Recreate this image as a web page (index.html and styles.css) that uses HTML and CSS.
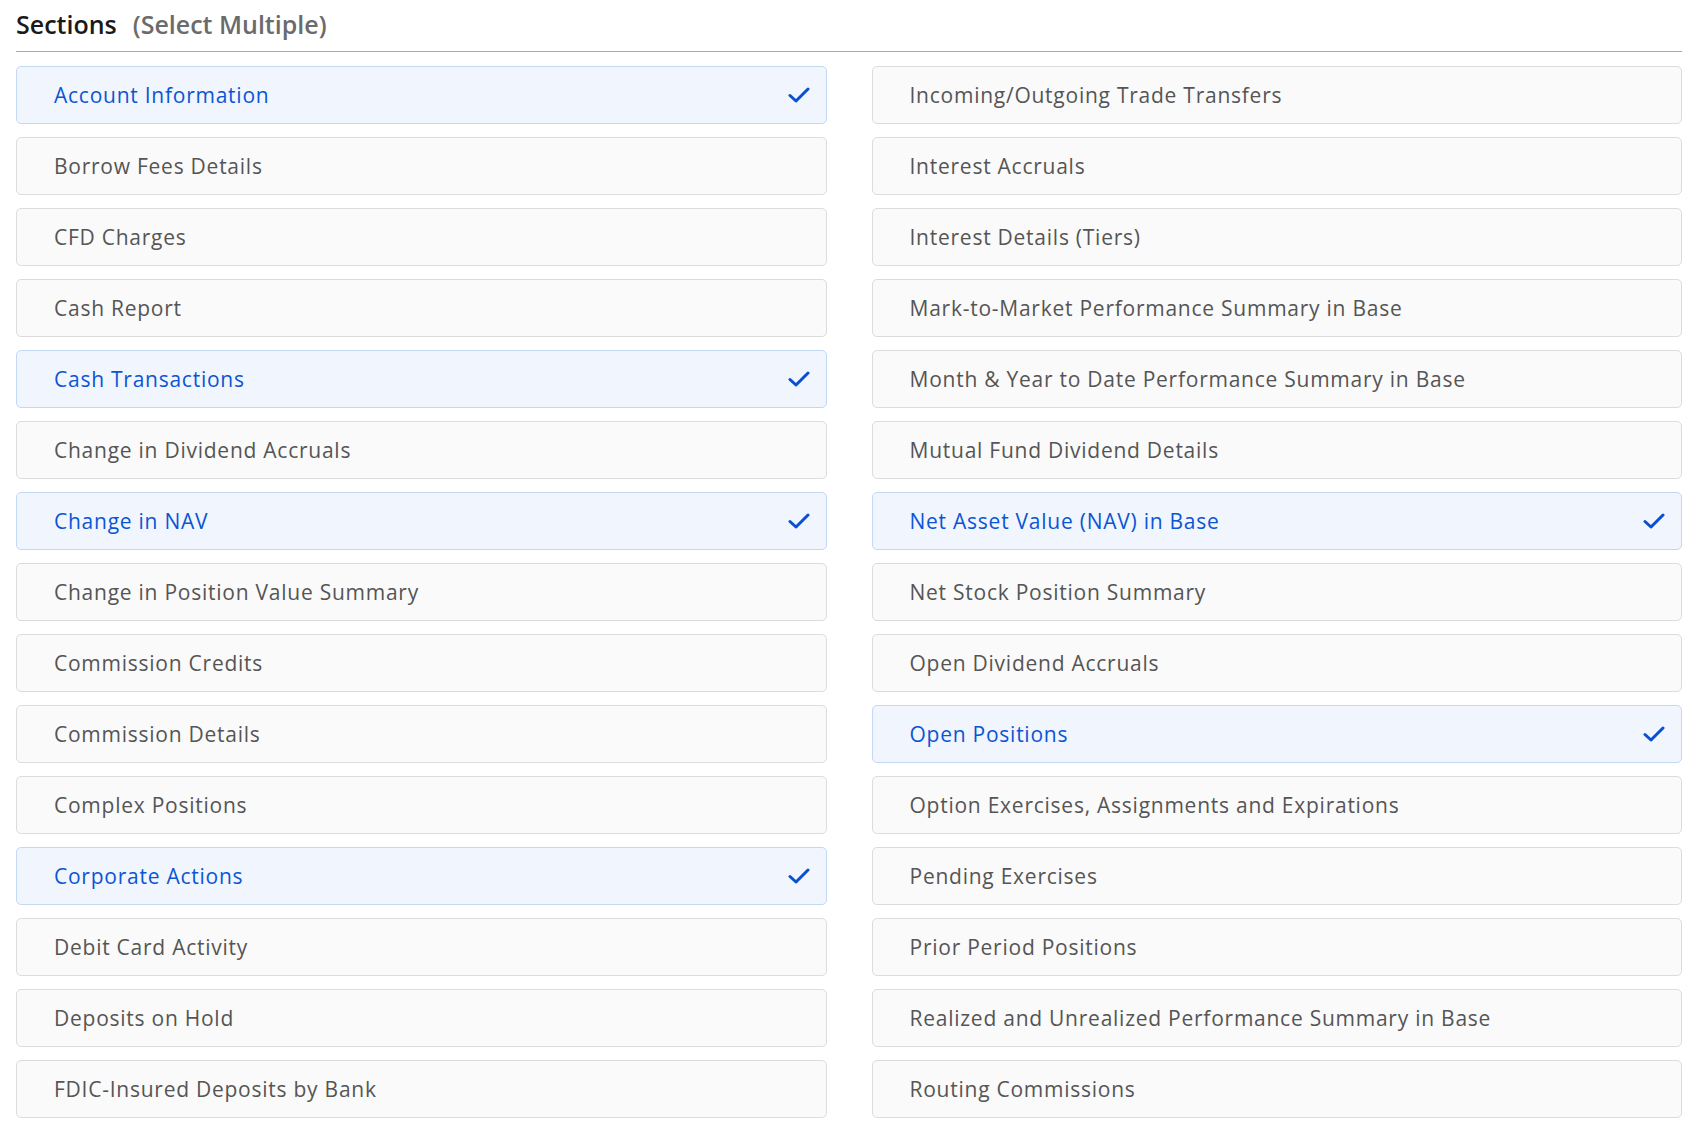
FILE: index.html
```html
<!DOCTYPE html>
<html lang="en">
<head>
  <meta charset="UTF-8" />
  <title>Sections</title>
  <link rel="stylesheet" href="styles.css">
</head>
<body>
  <div class="container">
    <div class="cabecera">
      <span class="titulo">Sections</span>
      <span class="nota">(Select Multiple)</span>
    </div>

    <div class="lista">
      <div class="opcion activa"><span>Account Information</span><svg class="check" viewBox="0 0 22 16"><path d="M2 8.5 L8 14 L20 2"/></svg></div>
      <div class="opcion"><span>Borrow Fees Details</span></div>
      <div class="opcion"><span>CFD Charges</span></div>
      <div class="opcion"><span>Cash Report</span></div>
      <div class="opcion activa"><span>Cash Transactions</span><svg class="check" viewBox="0 0 22 16"><path d="M2 8.5 L8 14 L20 2"/></svg></div>
      <div class="opcion"><span>Change in Dividend Accruals</span></div>
      <div class="opcion activa"><span>Change in NAV</span><svg class="check" viewBox="0 0 22 16"><path d="M2 8.5 L8 14 L20 2"/></svg></div>
      <div class="opcion"><span>Change in Position Value Summary</span></div>
      <div class="opcion"><span>Commission Credits</span></div>
      <div class="opcion"><span>Commission Details</span></div>
      <div class="opcion"><span>Complex Positions</span></div>
      <div class="opcion activa"><span>Corporate Actions</span><svg class="check" viewBox="0 0 22 16"><path d="M2 8.5 L8 14 L20 2"/></svg></div>
      <div class="opcion"><span>Debit Card Activity</span></div>
      <div class="opcion"><span>Deposits on Hold</span></div>
      <div class="opcion"><span>FDIC-Insured Deposits by Bank</span></div>

      <div class="opcion"><span>Incoming/Outgoing Trade Transfers</span></div>
      <div class="opcion"><span>Interest Accruals</span></div>
      <div class="opcion"><span>Interest Details (Tiers)</span></div>
      <div class="opcion"><span>Mark-to-Market Performance Summary in Base</span></div>
      <div class="opcion"><span>Month &amp; Year to Date Performance Summary in Base</span></div>
      <div class="opcion"><span>Mutual Fund Dividend Details</span></div>
      <div class="opcion activa"><span>Net Asset Value (NAV) in Base</span><svg class="check" viewBox="0 0 22 16"><path d="M2 8.5 L8 14 L20 2"/></svg></div>
      <div class="opcion"><span>Net Stock Position Summary</span></div>
      <div class="opcion"><span>Open Dividend Accruals</span></div>
      <div class="opcion activa"><span>Open Positions</span><svg class="check" viewBox="0 0 22 16"><path d="M2 8.5 L8 14 L20 2"/></svg></div>
      <div class="opcion"><span>Option Exercises, Assignments and Expirations</span></div>
      <div class="opcion"><span>Pending Exercises</span></div>
      <div class="opcion"><span>Prior Period Positions</span></div>
      <div class="opcion"><span>Realized and Unrealized Performance Summary in Base</span></div>
      <div class="opcion"><span>Routing Commissions</span></div>
    </div>
  </div>
</body>
</html>
```

FILE: styles.css
```css
body {
  font-family: 'Open Sans', sans-serif;
  margin: 0;
  background: #ffffff;
  color: #1a1a1a;
}

.container {
  width: 1666px;
  padding: 0 16px;
}

.cabecera {
  height: 52px;
  border-bottom: 1px solid #a8a8a8;
  display: flex;
  align-items: center;
  gap: 16px;
  font-size: 25px;
  font-weight: 600;
  box-sizing: border-box;
  padding-bottom: 3px;
}

.titulo {
  color: #1a1a1a;
}

.nota {
  color: #6b6b6b;
}

.lista {
  margin-top: 14px;
  display: grid;
  grid-template-columns: 1fr 1fr;
  grid-template-rows: repeat(15, 58px);
  grid-auto-flow: column;
  column-gap: 45px;
  row-gap: 13px;
}

.opcion {
  display: flex;
  align-items: center;
  justify-content: space-between;
  padding: 0 16px 0 37px;
  background: #fafafa;
  border: 1px solid #dcdcdc;
  border-radius: 5px;
  font-size: 21px;
  letter-spacing: 0.75px;
  color: #555555;
}

.opcion.activa {
  background: #f1f5fd;
  border-color: #c4d7f3;
  color: #0b55d4;
}

.check {
  width: 22px;
  height: 16px;
  fill: none;
  stroke: #0b4fd1;
  stroke-width: 3;
  stroke-linecap: round;
  stroke-linejoin: round;
}
```
